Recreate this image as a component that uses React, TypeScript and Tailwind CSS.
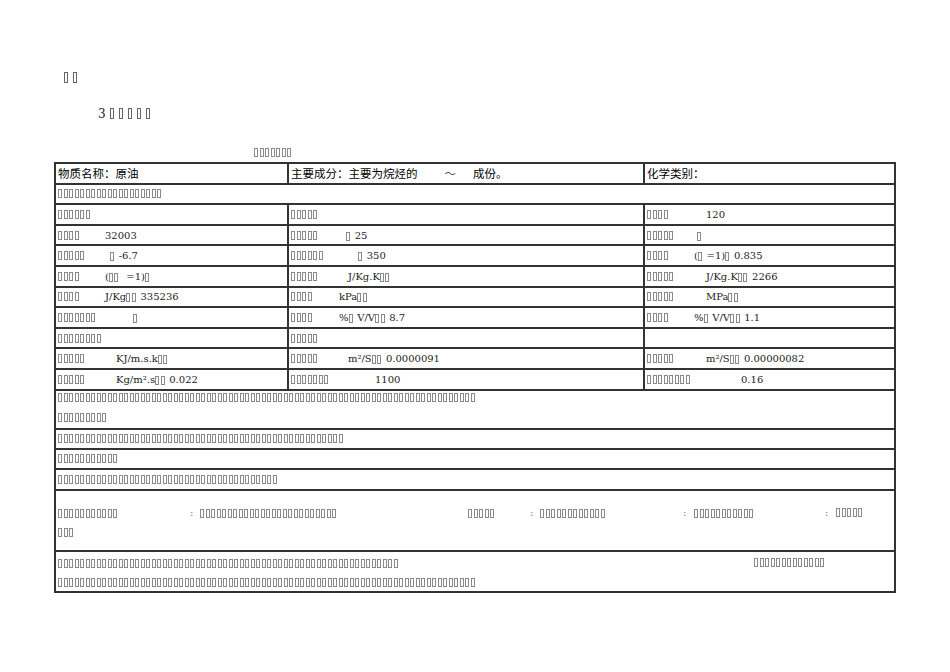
import type { ReactNode } from 'react';

// boxes standing in for glyphs that did not render in the source document
function Tofu({ n, big = false }: { n: number; big?: boolean }) {
  return (
    <span className="inline-flex items-center align-middle">
      {Array.from({ length: n }).map((_, i) => (
        <span
          key={i}
          className={
            big
              ? 'mr-[5px] inline-block h-[11px] w-[4px] border border-[#666]'
              : 'mr-[1.5px] inline-block h-[9px] w-[4px] border border-[#8a8a8a]'
          }
        />
      ))}
    </span>
  );
}

interface CellProps {
  label: number;
  labelW?: string;
  value?: ReactNode;
  className?: string;
}

function Cell({ label, labelW = 'w-[47px]', value, className = '' }: CellProps) {
  return (
    <div className={`flex h-full items-center pl-[2px] ${className}`}>
      <span className={`inline-flex shrink-0 ${labelW}`}>
        <Tofu n={label} />
      </span>
      {value != null && <span className="whitespace-pre">{value}</span>}
    </div>
  );
}

const row = 'flex h-[20.6px] border-b-2 border-[#333]';
const c1 = 'w-[233px] shrink-0 border-r-2 border-[#333]';
const c2 = 'w-[356px] shrink-0 border-r-2 border-[#333]';
const c3 = 'flex-1';

export default function App() {
  return (
    <div className="relative flex h-[672px] w-[950px] flex-col overflow-hidden bg-white font-['DejaVu_Serif',serif] text-[10px] text-[#222]">
      <div className="mt-[72px] flex h-[11px] pl-[64px]">
        <Tofu n={2} big />
      </div>
      <div className="mt-[25px] flex h-[11px] items-center pl-[98px] text-[12px]">
        <span className="mr-[4px]">3</span>
        <Tofu n={5} big />
      </div>
      <div className="mt-[29px] flex h-[9px] pl-[254px]">
        <Tofu n={7} />
      </div>

      <div className="ml-[54px] mt-[5px] flex w-[842px] flex-col border-x-2 border-t-2 border-[#333]">
        {/* heading row */}
        <div className={`${row} font-['Noto_Sans_CJK_SC',sans-serif] text-[11.5px] text-black`}>
          <div className={`${c1} flex items-center pl-[2px]`}>物质名称：原油</div>
          <div className={`${c2} flex items-center pl-[2px]`}>
            <span>主要成分：主要为烷烃的</span>
            <span className="ml-[27px] text-[#555]">～</span>
            <span className="ml-[17px]">成份。</span>
          </div>
          <div className={`${c3} flex items-center pl-[2px]`}>化学类别：</div>
        </div>

        <div className={row}>
          <div className="flex items-center pl-[2px]">
            <Tofu n={19} />
          </div>
        </div>

        <div className={row}>
          <Cell label={6} className={c1} />
          <Cell label={5} className={c2} />
          <Cell label={4} labelW="w-[59px]" value="120" className={c3} />
        </div>

        <div className={row}>
          <Cell label={4} value="32003" className={c1} />
          <Cell label={5} labelW="w-[55px]" value={<><Tofu n={1} /> 25</>} className={c2} />
          <Cell label={5} labelW="w-[50px]" value={<Tofu n={1} />} className={c3} />
        </div>

        <div className={row}>
          <Cell label={5} labelW="w-[52px]" value={<><Tofu n={1} /> -6.7</>} className={c1} />
          <Cell label={6} labelW="w-[67px]" value={<><Tofu n={1} /> 350</>} className={c2} />
          <Cell
            label={4}
            value={<>(<Tofu n={1} /> =1)<Tofu n={1} /> 0.835</>}
            className={c3}
          />
        </div>

        <div className={row}>
          <Cell label={4} value={<>(<Tofu n={2} />  =1)<Tofu n={1} /></>} className={c1} />
          <Cell label={5} labelW="w-[57px]" value={<>J/Kg.K<Tofu n={2} /></>} className={c2} />
          <Cell label={5} labelW="w-[59px]" value={<>J/Kg.K<Tofu n={2} /> 2266</>} className={c3} />
        </div>

        <div className={row}>
          <Cell label={4} value={<>J/Kg<Tofu n={2} /> 335236</>} className={c1} />
          <Cell label={4} labelW="w-[48px]" value={<>kPa<Tofu n={2} /></>} className={c2} />
          <Cell label={5} labelW="w-[59px]" value={<>MPa<Tofu n={2} /></>} className={c3} />
        </div>

        <div className={row}>
          <Cell label={7} labelW="w-[75px]" value={<Tofu n={1} />} className={c1} />
          <Cell label={4} labelW="w-[48px]" value={<>%<Tofu n={1} /> V/V<Tofu n={2} /> 8.7</>} className={c2} />
          <Cell label={4} value={<>%<Tofu n={1} /> V/V<Tofu n={2} /> 1.1</>} className={c3} />
        </div>

        <div className={row}>
          <Cell label={8} labelW="w-[60px]" className={c1} />
          <Cell label={5} className={c2} />
          <div className={c3} />
        </div>

        <div className={row}>
          <Cell label={5} labelW="w-[58px]" value={<>KJ/m.s.k<Tofu n={2} /></>} className={c1} />
          <Cell label={5} labelW="w-[57px]" value={<>m²/S<Tofu n={2} /> 0.0000091</>} className={c2} />
          <Cell label={5} labelW="w-[59px]" value={<>m²/S<Tofu n={2} /> 0.00000082</>} className={c3} />
        </div>

        <div className={row}>
          <Cell label={5} labelW="w-[58px]" value={<>Kg/m².s<Tofu n={2} /> 0.022</>} className={c1} />
          <Cell label={7} labelW="w-[84px]" value="1100" className={c2} />
          <Cell label={8} labelW="w-[94px]" value="0.16" className={c3} />
        </div>

        {/* full width text rows */}
        <div className="flex h-[39px] flex-col border-b-2 border-[#333] pl-[2px]">
          <div className="flex h-[13px] items-center">
            <Tofu n={76} />
          </div>
          <div className="mt-[7px] flex h-[13px] items-center">
            <Tofu n={9} />
          </div>
        </div>

        <div className="flex h-[20px] items-center border-b-2 border-[#333] pl-[2px]">
          <Tofu n={52} />
        </div>
        <div className="flex h-[20px] items-center border-b-2 border-[#333] pl-[2px]">
          <Tofu n={11} />
        </div>
        <div className="flex h-[21px] items-center border-b-2 border-[#333] pl-[2px]">
          <Tofu n={40} />
        </div>

        <div className="flex h-[61px] flex-col border-b-2 border-[#333] pl-[2px] pt-[15px] text-[#777]">
          <div className="flex h-[13px] items-center">
            <span className="w-[132px] shrink-0"><Tofu n={11} /></span>
            <span className="w-[10px] shrink-0">:</span>
            <span className="w-[268px] shrink-0"><Tofu n={25} /></span>
            <span className="w-[62px] shrink-0"><Tofu n={5} /></span>
            <span className="w-[10px] shrink-0">:</span>
            <span className="w-[143px] shrink-0"><Tofu n={12} /></span>
            <span className="w-[11px] shrink-0">:</span>
            <span className="w-[131px] shrink-0"><Tofu n={11} /></span>
            <span className="w-[11px] shrink-0">:</span>
            <Tofu n={5} />
          </div>
          <div className="mt-[7px] flex h-[13px] items-center">
            <Tofu n={3} />
          </div>
        </div>

        <div className="flex h-[41px] flex-col border-b-2 border-[#333] pl-[2px] pt-[4px]">
          <div className="flex h-[13px] items-center">
            <span className="w-[696px] shrink-0"><Tofu n={62} /></span>
            <Tofu n={13} />
          </div>
          <div className="mt-[7px] flex h-[13px] items-center">
            <Tofu n={76} />
          </div>
        </div>
      </div>
    </div>
  );
}
